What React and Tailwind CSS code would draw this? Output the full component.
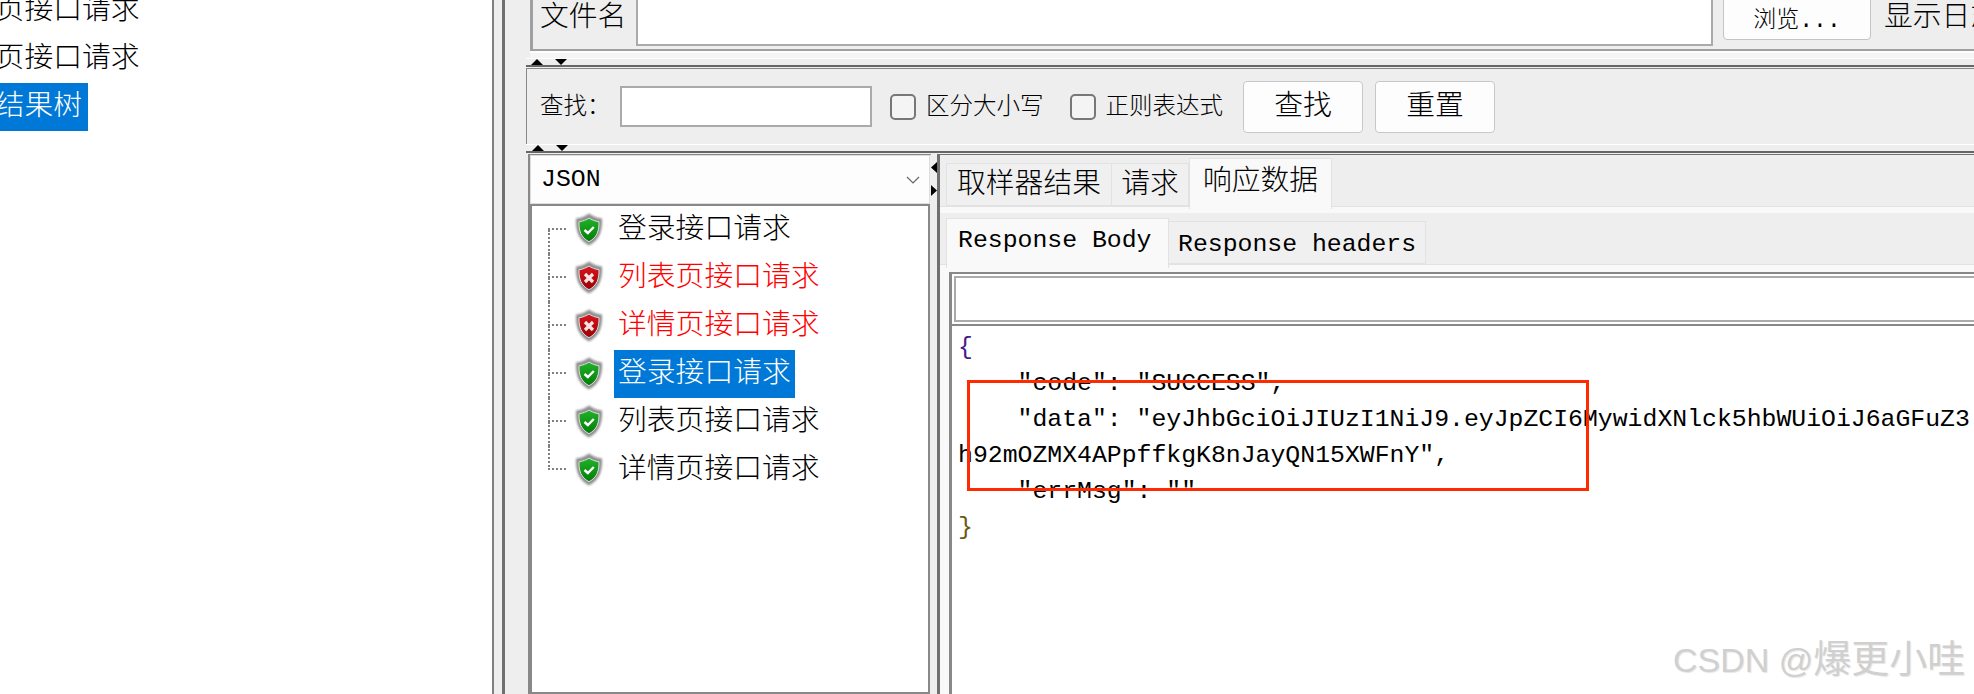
import React from "react";

const requests = [
  { name: "登录接口请求", ok: true },
  { name: "列表页接口请求", ok: false },
  { name: "详情页接口请求", ok: false },
  { name: "登录接口请求", ok: true, selected: true },
  { name: "列表页接口请求", ok: true },
  { name: "详情页接口请求", ok: true },
];

const Shield = ({ ok }) => {
  const id = ok ? "shield-ok" : "shield-bad";
  return (
    <svg width="30" height="35" viewBox="0 0 30 35" className="shrink-0">
      <defs>
        <filter id={`${id}-blur`} x="-20%" y="-20%" width="140%" height="140%">
          <feGaussianBlur stdDeviation="1" />
        </filter>
        <linearGradient id={id} x1="0" y1="0" x2="0" y2="1">
          <stop offset="0" stopColor={ok ? "#1fb526" : "#d8161c"} />
          <stop offset="1" stopColor={ok ? "#047a0b" : "#9a0006"} />
        </linearGradient>
      </defs>
      <path
        d="M15 1.5C11 4.5 6.5 6 2 6.5C1.5 19 4.5 28 15 33.5C25.5 28 28.5 19 28 6.5C23.5 6 19 4.5 15 1.5Z"
        fill="#8f8f8f"
        filter={`url(#${id}-blur)`}
      />
      <path
        d="M15 6C12.5 7.8 9 9.2 5 9.7C4.8 19 7 25.5 15 29.7C23 25.5 25.2 19 25 9.7C21 9.2 17.5 7.8 15 6Z"
        fill={`url(#${id})`}
        stroke="#dcdcdc"
        strokeWidth="1"
      />
      {ok ? (
        <path d="M10.5 18L13.8 21L19.8 15" fill="none" stroke="#fff" strokeWidth="2.4" />
      ) : (
        <path d="M11 14L19 22M19 14L11 22" fill="none" stroke="#f6e4e4" strokeWidth="3.2" />
      )}
    </svg>
  );
};

const Triangle = ({ dir, className = "" }) => {
  const points = {
    up: "6,0 12,6 0,6",
    down: "0,0 12,0 6,6",
    left: "6,0 6,11 0,5.5",
    right: "0,0 6,5.5 0,11",
  }[dir];
  const vertical = dir === "up" || dir === "down";
  return (
    <svg
      width={vertical ? 12 : 6}
      height={vertical ? 6 : 11}
      viewBox={vertical ? "0 0 12 6" : "0 0 6 11"}
      className={`block shrink-0 ${className}`}
    >
      <polygon points={points} fill="#000" />
    </svg>
  );
};

// the little up/down arrows over a horizontal split line
const Splitter = ({ offset }) => (
  <div className={`flex gap-[12px] h-[6px] ${offset}`}>
    <Triangle dir="up" />
    <Triangle dir="down" />
  </div>
);

const Checkbox = ({ label, className = "" }) => (
  <div className={`flex items-center ${className}`}>
    <span className="w-[26px] h-[26px] rounded-[5px] border-2 border-[#777] bg-[#f4f4f4]" />
    <span className="ml-[10px] pt-[3px] text-[23.5px] leading-none whitespace-nowrap">{label}</span>
  </div>
);

const TreeRow = ({ item, first, last }) => (
  <div className="flex h-[48px]">
    <div className="ml-[16px] w-[18px] shrink-0">
      <div
        className={`h-[24px] border-b-2 border-dotted border-[#808080] ${
          first ? "" : "border-l-2"
        }`}
      />
      {!last && <div className="h-[24px] border-l-2 border-dotted border-[#808080]" />}
    </div>
    <div className="ml-[8px] pt-[6px]">
      <Shield ok={item.ok} />
    </div>
    <div
      className={`ml-[10px] px-[4px] pt-[3px] text-[28.8px] leading-[44px] h-[48px] whitespace-nowrap ${
        item.selected ? "bg-[#0078d7] text-white" : item.ok ? "text-black" : "text-[#ff0000]"
      }`}
    >
      {item.name}
    </div>
  </div>
);

const jsonLines = [
  "{",
  '    "code": "SUCCESS",',
  '    "data": "eyJhbGciOiJIUzI1NiJ9.eyJpZCI6MywidXNlck5hbWUiOiJ6aGFuZ3',
  'h92mOZMX4APpffkgK8nJayQN15XWFnY",',
  '    "errMsg": ""',
  "}",
];

const App = () => {
  return (
    <div className="relative flex h-[694px] w-[1974px] overflow-hidden bg-white text-black font-light font-['Liberation_Mono','Noto_Sans_CJK_SC',monospace]">
      {/* test plan tree on the left, cut by the screenshot */}
      <div className="w-[492px] shrink-0 -mt-[13px] text-[28.8px] leading-[44px] whitespace-nowrap">
        <div className="h-[48px] -ml-[62px] pt-[3px]">列表页接口请求</div>
        <div className="h-[48px] -ml-[62px] pt-[3px]">详情页接口请求</div>
        <div className="h-[48px] -ml-[66px] w-[154px] pl-[4px] pt-[3px] bg-[#0078d7] text-white">察看结果树</div>
      </div>

      <div className="w-[10px] shrink-0 border-l-2 border-[#808080] bg-[#eeeeee]" />

      <div className="flex-1 min-w-0 flex flex-col border-l-[3px] border-[#707070] bg-[#eeeeee] pl-[21px]">
        {/* file row */}
        <div className="ml-[4px] h-[51px] shrink-0 flex border-l-[3px] border-b-2 border-[#a0a0a0]">
          <div className="ml-[7px] w-[96px] shrink-0 text-[28.8px] leading-[38px]">文件名</div>
          <div className="w-[1077px] h-[46px] shrink-0 bg-white border-x-2 border-b-2 border-[#aaaaaa]" />
          <div className="ml-[10px] w-[148px] h-[45px] -mt-[5px] pt-[8px] shrink-0 rounded-[4px] border border-[#c4c4c4] bg-[#fdfdfd] flex items-center justify-center text-[23px]">
            浏览...
          </div>
          <div className="ml-[13px] text-[28.8px] leading-[38px] whitespace-nowrap">显示日志内容</div>
        </div>
        <div className="ml-[4px] h-[7px] shrink-0 border-t-2 border-white bg-[#f5f5f5]" />
        <div className="h-[1px] shrink-0 bg-white" />
        <Splitter offset="ml-[5px]" />

        {/* search row */}
        <div className="h-[80px] shrink-0 border-t-2 border-b border-t-[#666666] border-b-white bg-[#eeeeee] pt-[1px]">
          <div className="h-full w-full flex items-center border-l border-t border-[#888888]">
            <span className="ml-[13px] w-[80px] pt-[3px] text-[23.5px] leading-none whitespace-nowrap">查找：</span>
            <div className="w-[252px] h-[41px] border-2 border-[#aaaaaa] bg-white" />
            <Checkbox label="区分大小写" className="ml-[18px]" />
            <Checkbox label="正则表达式" className="ml-[26px]" />
            <div className="ml-[20px] w-[120px] h-[52px] pt-[2px] rounded-[4px] border border-[#c8c8c8] bg-[#fdfdfd] flex items-center justify-center text-[28.8px]">
              查找
            </div>
            <div className="ml-[12px] w-[120px] h-[52px] pt-[2px] rounded-[4px] border border-[#c8c8c8] bg-[#fdfdfd] flex items-center justify-center text-[28.8px]">
              重置
            </div>
          </div>
        </div>
        <Splitter offset="ml-[6px]" />

        {/* results */}
        <div className="flex-1 min-h-0 flex border-t-2 border-[#666666] pt-[1px]">
          <div className="ml-[2px] w-[403px] shrink-0 flex flex-col border-l-2 border-t border-[#888888]">
            <div className="h-[49px] shrink-0 flex items-center justify-between bg-[#fdfdfd] border border-[#dddddd] pl-[10px] pr-[9px] mr-[1px]">
              <span className="text-[24.8px] leading-none">JSON</span>
              <svg width="14" height="8" viewBox="0 0 14 8">
                <path d="M1 1L7 7L13 1" fill="none" stroke="#666" strokeWidth="1.2" />
              </svg>
            </div>
            <div className="flex-1 bg-white border-2 border-[#888888] mr-[1px]">
              {requests.map((item, i) => (
                <TreeRow key={i} item={item} first={i === 0} last={i === requests.length - 1} />
              ))}
            </div>
          </div>

          <div className="w-[6px] shrink-0 pt-[8px] flex flex-col gap-[12px]">
            <Triangle dir="left" />
            <Triangle dir="right" />
          </div>

          <div className="flex-1 min-w-0 flex flex-col border-l-[3px] border-t border-[#707070] bg-[#f5f5f5]">
            {/* outer tabs */}
            <div className="h-[51px] shrink-0 flex items-end pl-[6px] bg-[#eeeeee]">
              <div className="h-[43px] w-[166px] border border-[#e2e2e2] bg-[#f0f0f0] text-center text-[28.8px] leading-[44px]">
                取样器结果
              </div>
              <div className="h-[43px] w-[77px] border-y border-r border-[#e2e2e2] bg-[#f0f0f0] text-center text-[28.8px] leading-[44px]">
                请求
              </div>
              <div className="relative h-[51px] w-[143px] -mb-[3px] border-x border-t border-[#e2e2e2] bg-[#f9f9f9] text-center text-[28.8px] leading-[48px]">
                响应数据
              </div>
            </div>

            <div className="flex-1 min-h-0 flex flex-col border-t border-[#e2e2e2] bg-[#f9f9f9] pt-[6px]">
              {/* inner tabs */}
              <div className="h-[52px] shrink-0 flex items-end pl-[6px] bg-[#eeeeee] border-b border-[#e2e2e2]">
                <div className="relative h-[50px] w-[223px] -mb-[4px] border-x border-t border-[#e2e2e2] bg-[#f9f9f9] pl-[11px] text-[24.8px] leading-[42px] whitespace-pre">
                  Response Body
                </div>
                <div className="h-[43px] w-[257px] border-y border-r border-[#e2e2e2] bg-[#f0f0f0] pl-[9px] text-[24.8px] leading-[44px] whitespace-pre">
                  Response headers
                </div>
              </div>

              <div className="flex-1 min-h-0 mt-[7px] ml-[9px] flex flex-col border-l-[3px] border-t-2 border-[#888888] bg-white">
                <div className="h-[52px] shrink-0 p-[2px] pr-0 border-b-2 border-[#888888]">
                  <div className="h-full border-y-2 border-l-2 border-[#aaaaaa] bg-white" />
                </div>
                <div className="pt-[3px] pl-[6px] text-[24.8px] leading-[36px] whitespace-pre">
                  {jsonLines.map((line, i) => (
                    <div
                      key={i}
                      className={`h-[36px] ${
                        i === 0 ? "text-[#4a1a8a]" : i === jsonLines.length - 1 ? "text-[#6b5a10]" : ""
                      }`}
                    >
                      {line}
                    </div>
                  ))}
                </div>
              </div>
            </div>
          </div>
        </div>
      </div>

      {/* annotation drawn over the screenshot */}
      <div className="absolute left-[967px] top-[380px] w-[622px] h-[111px] border-[3px] border-[#ff2a00]" />
      <div className="absolute left-[1673px] top-[634px] text-[34px] leading-[50px] whitespace-nowrap text-[#d0d0d0] font-normal [text-shadow:1px_1px_1px_#e6e6e6] font-['Liberation_Sans','Noto_Sans_CJK_SC',sans-serif]">
        CSDN @<span className="text-[38px]">爆更小哇</span>
      </div>
    </div>
  );
};

export default App;
